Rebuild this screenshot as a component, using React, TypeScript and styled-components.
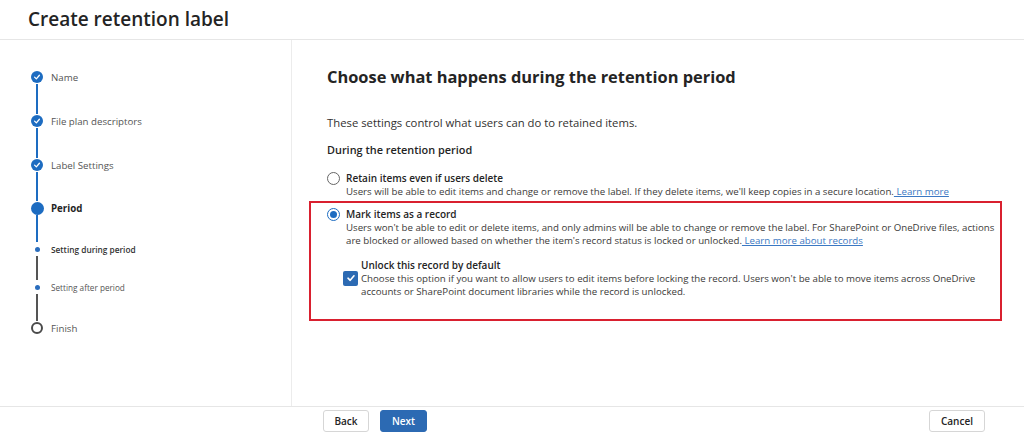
import React from "react";
import styled, { createGlobalStyle, css } from "styled-components";

const Global = createGlobalStyle`
  html, body { margin: 0; padding: 0; background: #fff; }
  body { font-family: "Open Sans", "Noto Sans", Arial, sans-serif; color: #323130; }
  * { box-sizing: border-box; }
`;

const Page = styled.div`
  width: 1024px;
  height: 434px;
  display: flex;
  flex-direction: column;
  overflow: hidden;
`;

const Header = styled.header`
  height: 40px;
  border-bottom: 1px solid #e6e6e6;
  display: flex;
  align-items: center;
  padding-left: 28px;
`;

const Title = styled.h1`
  margin: 0;
  font-size: 19px;
  font-weight: 600;
  color: #242424;
  padding-bottom: 2px;
`;

const Body = styled.div`
  flex: 1;
  display: flex;
  min-height: 0;
`;

const Sidebar = styled.nav`
  width: 292px;
  border-right: 1px solid #ececec;
  padding: 30px 0 0 30px;
  display: flex;
  flex-direction: column;
`;

const Step = styled.div<{ $h?: number }>`
  display: flex;
  height: ${(p) => (p.$h ? `${p.$h}px` : "auto")};
`;

const Rail = styled.div`
  width: 14px;
  display: flex;
  flex-direction: column;
  align-items: center;
`;

const Marker = styled.div`
  width: 14px;
  height: 14px;
  display: flex;
  align-items: center;
  justify-content: center;
  flex-shrink: 0;
`;

const Dot = styled.div<{ $kind: "done" | "current" | "sub" | "todo" }>`
  border-radius: 50%;
  display: flex;
  align-items: center;
  justify-content: center;
  ${(p) =>
    p.$kind === "done" &&
    css`
      width: 12px;
      height: 12px;
      background: #1d6cc1;
    `}
  ${(p) =>
    p.$kind === "current" &&
    css`
      width: 13px;
      height: 13px;
      background: #1d6cc1;
    `}
  ${(p) =>
    p.$kind === "sub" &&
    css`
      width: 5px;
      height: 5px;
      background: #2a6dbd;
    `}
  ${(p) =>
    p.$kind === "todo" &&
    css`
      width: 12px;
      height: 12px;
      border: 2px solid #4a4a4a;
      background: #fff;
    `}
`;

const Line = styled.div<{ $color: string }>`
  width: 2px;
  flex: 1;
  background: ${(p) => p.$color};
`;

const StepLabel = styled.div<{ $variant: "normal" | "current" | "subActive" | "sub" }>`
  margin-left: 7px;
  height: 14px;
  display: flex;
  align-items: center;
  white-space: nowrap;
  ${(p) =>
    p.$variant === "normal" &&
    css`
      font-size: 9.7px;
      color: #555;
    `}
  ${(p) =>
    p.$variant === "current" &&
    css`
      font-size: 9.7px;
      font-weight: 700;
      color: #242424;
    `}
  ${(p) =>
    p.$variant === "subActive" &&
    css`
      font-size: 8.3px;
      font-weight: 600;
      color: #333;
    `}
  ${(p) =>
    p.$variant === "sub" &&
    css`
      font-size: 8.2px;
      color: #555;
    `}
`;

const Main = styled.main`
  flex: 1;
  padding: 25px 0 0 35px;
  display: flex;
  flex-direction: column;
`;

const Heading = styled.h2`
  margin: 0;
  font-size: 16.4px;
  line-height: 24px;
  font-weight: 700;
  color: #242424;
`;

const Intro = styled.p`
  margin: 26px 0 0;
  font-size: 11.3px;
  line-height: 16px;
  color: #323130;
`;

const Section = styled.h3`
  margin: 11px 0 0;
  font-size: 10.9px;
  line-height: 16px;
  font-weight: 600;
  color: #242424;
`;

const Option = styled.div`
  display: grid;
  grid-template-columns: 13px auto;
  column-gap: 6px;
  align-items: start;
`;

const Radio = styled.span<{ $checked?: boolean }>`
  width: 13px;
  height: 13px;
  margin-top: 1px;
  border-radius: 50%;
  border: 1px solid ${(p) => (p.$checked ? "#1d6cc1" : "#666")};
  background: #fff;
  display: flex;
  align-items: center;
  justify-content: center;
  &::after {
    content: "";
    width: 7px;
    height: 7px;
    border-radius: 50%;
    background: ${(p) => (p.$checked ? "#1d6cc1" : "transparent")};
  }
`;

const OptTitle = styled.div`
  font-size: 10px;
  line-height: 14px;
  font-weight: 600;
  color: #242424;
  white-space: nowrap;
`;

const Desc = styled.div<{ $max?: number }>`
  font-size: 9.7px;
  line-height: 13.5px;
  color: #3b3a39;
  max-width: ${(p) => p.$max ?? 652}px;
`;

const Link = styled.a`
  color: #3b78c3;
  text-decoration: underline;
  cursor: pointer;
`;

const FirstOption = styled.div`
  margin-top: 13px;
`;

const Highlight = styled.div`
  margin: 2px 0 0 -18px;
  width: 693px;
  border: 2px solid #d9202f;
  padding: 4px 0 20px 16px;
`;

const Nested = styled.div`
  margin: 10px 0 0 16px;
`;

const NestedTitle = styled(OptTitle)`
  margin-left: 18px;
`;

const CheckRow = styled.div`
  display: flex;
  gap: 3px;
  align-items: flex-start;
`;

const Checkbox = styled.span`
  width: 15px;
  height: 15px;
  margin-top: -1px;
  flex-shrink: 0;
  border-radius: 2px;
  background: #2c6ab3;
  display: flex;
  align-items: center;
  justify-content: center;
`;

const Footer = styled.footer`
  height: 28px;
  border-top: 1px solid #e6e6e6;
  display: flex;
  align-items: flex-start;
  padding: 3px 39px 0 323px;
`;

const Btn = styled.button<{ $primary?: boolean; $w: number }>`
  width: ${(p) => p.$w}px;
  height: 22px;
  border-radius: 3px;
  font-family: inherit;
  font-size: 10px;
  font-weight: 600;
  padding: 0;
  cursor: pointer;
  border: 1px solid ${(p) => (p.$primary ? "#2c6ab3" : "#d6d6d6")};
  background: ${(p) => (p.$primary ? "#2c6ab3" : "#fff")};
  color: ${(p) => (p.$primary ? "#fff" : "#242424")};
`;

const BtnGroup = styled.div`
  display: flex;
  gap: 11px;
  flex: 1;
`;

const Check = ({ size = 8 }: { size?: number }) => (
  <svg width={size} height={size} viewBox="0 0 10 10" fill="none">
    <path d="M2 5.2 L4.2 7.3 L8 2.8" stroke="#fff" strokeWidth="1.6" strokeLinecap="round" strokeLinejoin="round" />
  </svg>
);

type StepDef = {
  label: string;
  kind: "done" | "current" | "sub" | "todo";
  variant: "normal" | "current" | "subActive" | "sub";
  h?: number;
  line?: string;
};

const BLUE = "#1d6cc1";
const GRAY = "#555";

const steps: StepDef[] = [
  { label: "Name", kind: "done", variant: "normal", h: 44, line: BLUE },
  { label: "File plan descriptors", kind: "done", variant: "normal", h: 44, line: BLUE },
  { label: "Label Settings", kind: "done", variant: "normal", h: 43, line: BLUE },
  { label: "Period", kind: "current", variant: "current", h: 41, line: BLUE },
  { label: "Setting during period", kind: "sub", variant: "subActive", h: 38, line: GRAY },
  { label: "Setting after period", kind: "sub", variant: "sub", h: 41, line: GRAY },
  { label: "Finish", kind: "todo", variant: "normal" },
];

export default function App() {
  return (
    <>
      <Global />
      <Page>
        <Header>
          <Title>Create retention label</Title>
        </Header>
        <Body>
          <Sidebar>
            {steps.map((s) => (
              <Step key={s.label} $h={s.h}>
                <Rail>
                  <Marker>
                    <Dot $kind={s.kind}>{s.kind === "done" && <Check />}</Dot>
                  </Marker>
                  {s.line && <Line $color={s.line} />}
                </Rail>
                <StepLabel $variant={s.variant}>{s.label}</StepLabel>
              </Step>
            ))}
          </Sidebar>
          <Main>
            <Heading>Choose what happens during the retention period</Heading>
            <Intro>These settings control what users can do to retained items.</Intro>
            <Section>During the retention period</Section>
            <FirstOption>
              <Option>
                <Radio />
                <div>
                  <OptTitle>Retain items even if users delete</OptTitle>
                  <Desc>
                    Users will be able to edit items and change or remove the label. If they delete items, we'll keep
                    copies in a secure location.<Link> Learn more</Link>
                  </Desc>
                </div>
              </Option>
            </FirstOption>
            <Highlight>
              <Option>
                <Radio $checked />
                <div>
                  <OptTitle>Mark items as a record</OptTitle>
                  <Desc>
                    Users won't be able to edit or delete items, and only admins will be able to change or remove the
                    label. For SharePoint or OneDrive files, actions are blocked or allowed based on whether the item's
                    record status is locked or unlocked.<Link> Learn more about records</Link>
                  </Desc>
                </div>
              </Option>
              <Nested>
                <NestedTitle>Unlock this record by default</NestedTitle>
                <CheckRow>
                  <Checkbox>
                    <Check size={10} />
                  </Checkbox>
                  <Desc $max={625}>
                    Choose this option if you want to allow users to edit items before locking the record. Users won't
                    be able to move items across OneDrive accounts or SharePoint document libraries while the record is
                    unlocked.
                  </Desc>
                </CheckRow>
              </Nested>
            </Highlight>
          </Main>
        </Body>
        <Footer>
          <BtnGroup>
            <Btn $w={46}>Back</Btn>
            <Btn $w={47} $primary>
              Next
            </Btn>
          </BtnGroup>
          <Btn $w={56}>Cancel</Btn>
        </Footer>
      </Page>
    </>
  );
}
